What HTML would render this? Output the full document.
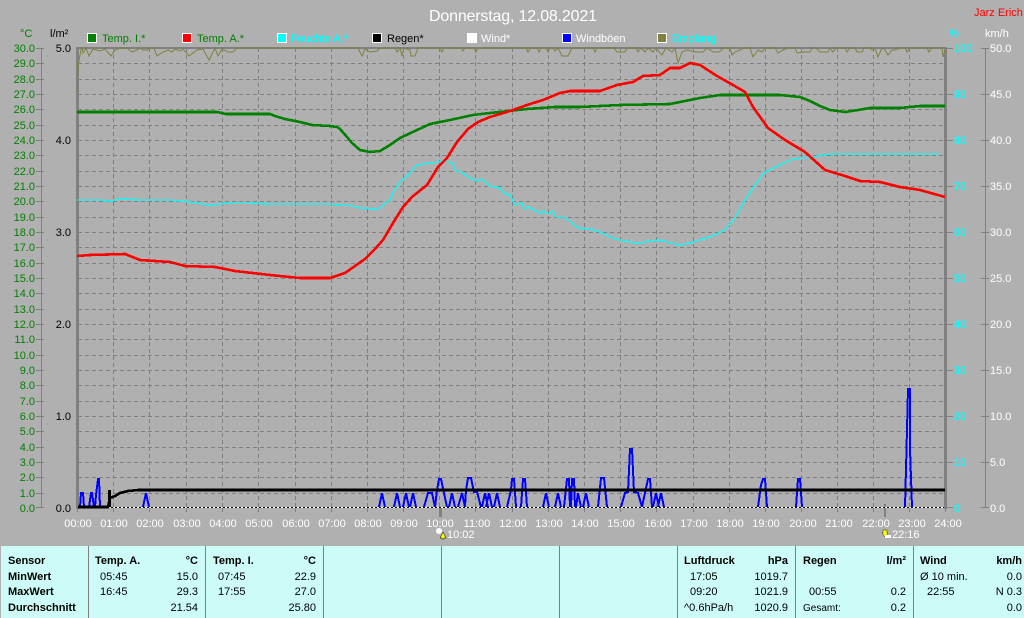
<!DOCTYPE html>
<html><head><meta charset="utf-8"><title>Donnerstag, 12.08.2021</title>
<style>
html,body{margin:0;padding:0;background:#b0b0b0}
svg{display:block;font-family:"Liberation Sans",sans-serif;font-size:11px}
.g text{fill:#008000;text-anchor:end}
.k text{fill:#000;text-anchor:end}
.c text{fill:#0ff;stroke:#0ff;stroke-width:.35;text-anchor:start}
.w text{fill:#fff;text-anchor:start}
.t text{fill:#fff;text-anchor:middle}
.b{font-weight:bold}
.r{text-anchor:end}
.d{shape-rendering:crispEdges;fill:none}
</style></head><body>
<svg width="1024" height="618" viewBox="0 0 1024 618" xmlns="http://www.w3.org/2000/svg">
<rect width="1024" height="618" fill="#b0b0b0"/>
<text x="429" y="21" font-size="16" fill="#fff" textLength="168">Donnerstag, 12.08.2021</text>
<text x="974" y="16" fill="#f00" font-size="11">Jarz Erich</text>
<text x="20" y="37" fill="#008000">°C</text>
<text x="50" y="37" fill="#000">l/m²</text>
<text x="949" y="37" fill="#0ff" stroke="#0ff" stroke-width=".3">%</text>
<text x="985" y="37" fill="#fff">km/h</text>

<g stroke="#fff" stroke-width="1" shape-rendering="crispEdges">
<rect x="87.5" y="33.5" width="9" height="9" fill="#008000"/>
<rect x="182.5" y="33.5" width="9" height="9" fill="#f00"/>
<rect x="277.5" y="33.5" width="9" height="9" fill="#0ff"/>
<rect x="372.5" y="33.5" width="9" height="9" fill="#000"/>
<rect x="467.5" y="33.5" width="9" height="9" fill="#fff"/>
<rect x="562.5" y="33.5" width="9" height="9" fill="#00f"/>
<rect x="657.5" y="33.5" width="9" height="9" fill="#808040"/>
</g>
<text x="102" y="42" fill="#008000">Temp. I.*</text>
<text x="197" y="42" fill="#008000">Temp. A.*</text>
<text x="291" y="42" fill="#0ff" stroke="#0ff" stroke-width=".3">Feuchte A.*</text>
<text x="387" y="42" fill="#000">Regen*</text>
<text x="481" y="42" fill="#fff">Wind*</text>
<text x="576" y="42" fill="#fff">Windböen</text>
<text x="672" y="42" fill="#0ff" stroke="#0ff" stroke-width=".3">Empfang</text>

<!-- grid -->
<path fill="none" stroke="#808080" stroke-width="1" stroke-dasharray="4 3" shape-rendering="crispEdges" d="M78 63.5H944M78 79.5H944M78 94.5H944M78 109.5H944M78 125.5H944M78 140.5H944M78 155.5H944M78 171.5H944M78 186.5H944M78 201.5H944M78 217.5H944M78 232.5H944M78 247.5H944M78 263.5H944M78 278.5H944M78 293.5H944M78 309.5H944M78 324.5H944M78 339.5H944M78 355.5H944M78 370.5H944M78 385.5H944M78 401.5H944M78 416.5H944M78 431.5H944M78 447.5H944M78 462.5H944M78 477.5H944M78 493.5H944
M113.5 48V508M149.5 48V508M186.5 48V508M222.5 48V508M258.5 48V508M295.5 48V508M331.5 48V508M367.5 48V508M403.5 48V508M439.5 48V508M475.5 48V508M512.5 48V508M548.5 48V508M584.5 48V508M620.5 48V508M656.5 48V508M693.5 48V508M729.5 48V508M765.5 48V508M801.5 48V508M837.5 48V508M873.5 48V508M909.5 48V508"/>

<!-- frame and axes -->
<g fill="#808080" shape-rendering="crispEdges">
<rect x="76" y="47" width="870" height="2"/>
<rect x="76" y="47" width="3" height="462"/>
<rect x="944" y="47" width="3" height="462"/>
<rect x="41" y="48" width="1" height="460"/>
<rect x="985" y="48" width="1" height="460"/>
<rect x="439" y="508" width="3" height="9"/>
<rect x="884" y="504" width="2" height="13"/>
</g>
<path fill="none" stroke="#808080" stroke-width="1" shape-rendering="crispEdges" d="M36 48.5H44M36 63.5H44M36 79.5H44M36 94.5H44M36 109.5H44M36 125.5H44M36 140.5H44M36 155.5H44M36 171.5H44M36 186.5H44M36 201.5H44M36 217.5H44M36 232.5H44M36 247.5H44M36 263.5H44M36 278.5H44M36 293.5H44M36 309.5H44M36 324.5H44M36 339.5H44M36 355.5H44M36 370.5H44M36 385.5H44M36 401.5H44M36 416.5H44M36 431.5H44M36 447.5H44M36 462.5H44M36 477.5H44M36 493.5H44M36 507.5H44
M946 48.5H953M946 94.5H953M946 140.5H953M946 186.5H953M946 232.5H953M946 278.5H953M946 324.5H953M946 370.5H953M946 416.5H953M946 462.5H953M946 507.5H953
M981 48.5H989M981 94.5H989M981 140.5H989M981 186.5H989M981 232.5H989M981 278.5H989M981 324.5H989M981 370.5H989M981 416.5H989M981 462.5H989M981 507.5H989
M77.5 508V512M113.5 508V512M149.5 508V512M186.5 508V512M222.5 508V512M258.5 508V512M295.5 508V512M331.5 508V512M367.5 508V512M403.5 508V512M475.5 508V512M512.5 508V512M548.5 508V512M584.5 508V512M620.5 508V512M656.5 508V512M693.5 508V512M729.5 508V512M765.5 508V512M801.5 508V512M837.5 508V512M873.5 508V512M909.5 508V512M945.5 508V512"/>

<!-- axis labels -->
<g class="g">
<text x="35" y="52">30.0</text><text x="35" y="67">29.0</text><text x="35" y="83">28.0</text><text x="35" y="98">27.0</text><text x="35" y="113">26.0</text><text x="35" y="129">25.0</text><text x="35" y="144">24.0</text><text x="35" y="159">23.0</text><text x="35" y="175">22.0</text><text x="35" y="190">21.0</text><text x="35" y="205">20.0</text><text x="35" y="221">19.0</text><text x="35" y="236">18.0</text><text x="35" y="251">17.0</text><text x="35" y="267">16.0</text><text x="35" y="282">15.0</text><text x="35" y="297">14.0</text><text x="35" y="313">13.0</text><text x="35" y="328">12.0</text><text x="35" y="343">11.0</text><text x="35" y="359">10.0</text><text x="35" y="374">9.0</text><text x="35" y="389">8.0</text><text x="35" y="405">7.0</text><text x="35" y="420">6.0</text><text x="35" y="435">5.0</text><text x="35" y="451">4.0</text><text x="35" y="466">3.0</text><text x="35" y="481">2.0</text><text x="35" y="497">1.0</text><text x="35" y="512">0.0</text>
</g>
<g class="k">
<text x="71" y="52">5.0</text><text x="71" y="144">4.0</text><text x="71" y="236">3.0</text><text x="71" y="328">2.0</text><text x="71" y="420">1.0</text><text x="71" y="512">0.0</text>
</g>
<g class="c">
<text x="954" y="52">100</text><text x="954" y="98">90</text><text x="954" y="144">80</text><text x="954" y="190">70</text><text x="954" y="236">60</text><text x="954" y="282">50</text><text x="954" y="328">40</text><text x="954" y="374">30</text><text x="954" y="420">20</text><text x="954" y="466">10</text><text x="954" y="512">0</text>
</g>
<g class="w">
<text x="990" y="52">50.0</text><text x="990" y="98">45.0</text><text x="990" y="144">40.0</text><text x="990" y="190">35.0</text><text x="990" y="236">30.0</text><text x="990" y="282">25.0</text><text x="990" y="328">20.0</text><text x="990" y="374">15.0</text><text x="990" y="420">10.0</text><text x="990" y="466">5.0</text><text x="990" y="512">0.0</text>
</g>
<g class="t">
<text x="78" y="527">00:00</text><text x="114" y="527">01:00</text><text x="150" y="527">02:00</text><text x="187" y="527">03:00</text><text x="223" y="527">04:00</text><text x="259" y="527">05:00</text><text x="296" y="527">06:00</text><text x="332" y="527">07:00</text><text x="368" y="527">08:00</text><text x="404" y="527">09:00</text><text x="440" y="527">10:00</text><text x="477" y="527">11:00</text><text x="513" y="527">12:00</text><text x="549" y="527">13:00</text><text x="585" y="527">14:00</text><text x="621" y="527">15:00</text><text x="658" y="527">16:00</text><text x="694" y="527">17:00</text><text x="730" y="527">18:00</text><text x="766" y="527">19:00</text><text x="803" y="527">20:00</text><text x="839" y="527">21:00</text><text x="876" y="527">22:00</text><text x="912" y="527">23:00</text><text x="948" y="527">24:00</text>
</g>

<!-- Empfang -->
<polyline fill="none" stroke="#808040" stroke-width="1" points="77,92 78,70 79,60 81,50 82,48 83,53 86,48 89,56 93,49 100,51 105,49 111,56 115,50 120,48 127,48 132,52 137,50 140,48 143,50 148,50 150,48 154,48 157,56 163,52 168,50 172,52 175,49 180,51 183,49 189,56 197,50 203,49 209,60 215,48 218,56 222,49 228,52 233,52 237,48 358,48 362,56 365,49 370,52 377,51 380,48 395,48 397,52 400,48 402,56 404,48 410,50 411,56 415,56 418,48 440,48 442,52 444,48 461,48 463,51 465,48 474,48 476,52 478,48 526,48 528,52 531,48 537,48 539,52 541,48 546,48 548,52 550,48 553,48 555,51 558,48 562,56 568,56 572,48 593,48 595,52 597,48 614,48 617,52 625,52 627,48 636,48 638,52 641,48 645,52 648,48 653,52 656,48 662,55 666,48 672,52 675,48 678,63 682,52 687,50 695,52 703,52 707,48 713,52 719,52 724,48 730,48 732,55 735,52 740,50 744,48 750,48 753,57 758,50 762,52 765,48 775,48 778,53 783,50 788,48 795,48 797,53 803,52 810,52 812,48 816,48 820,52 828,52 830,48 833,52 836,48 845,48 847,52 850,48 855,48 857,52 862,52 864,48 870,48 872,50 875,48 878,57 882,48 885,50 888,55 892,50 895,50 900,48 905,48 907,52 910,48 927,48 929,52 932,48 942,48 943,57 945,50"/>

<!-- Feuchte -->
<polyline class="d" stroke="#0ff" stroke-width="1.3" points="77,200 100,200 110,201 120,199 140,200 170,200 190,202 210,205 230,203 250,203 270,204 300,204 330,204 340,205 348,205 360,208 378,209 390,200 394,191 400,182 408,175 417,165 423,164 432,163 437,162 445,161 452,163 456,171 461,172 470,178 477,181 482,179 490,186 500,188 504,193 510,195 515,205 522,203 524,209 528,207 540,213 544,211 548,214 553,211 556,217 563,217 570,221 578,228 590,229 600,232 612,238 620,240 630,242 640,243 650,241 660,240 670,243 680,245 690,243 700,240 712,236 725,230 735,218 745,200 755,185 765,172 778,166 790,160 800,158 810,158 822,155 835,154 940,154"/>

<!-- Wind baseline -->
<path d="M79 507.5H944" stroke="#000" stroke-width="1" stroke-dasharray="2 2" fill="none" shape-rendering="crispEdges"/>
<path d="M81 507.5H944" stroke="#fff" stroke-width="1" stroke-dasharray="2 2" fill="none" shape-rendering="crispEdges"/>

<!-- Windböen -->
<path class="d" stroke="#00f" stroke-width="2" d="M80 507L81 493H83L84 507M89 507L91 493H92L94 507M95 507L96 495L98 479H99L100 507M143 507L146 493L149 507M379 507L382 493L385 507M394 507L397 493L400 507M403 507L406 493L409 507M410 507L413 493L416 507M424 507L428 493H432L435 507M435 507L437 490L439 479H441L447 507M449 507L452 493L455 507M458 507L462 493L465 507M465 507L466 490L468 478H471L474 492H477L481 507M482 507L485 493L488 507M486 507L489 493L492 507M494 507L497 493L500 507M507 507L511 490L512 479H514L516 507M521 507L523 479H525L527 507M543 507L546 493L549 507M555 507L558 493L561 507M564 507L567 479H569L570 507M571 507L572 479H574L575 507M576 507L578 493L581 507M583 507L586 493L589 507M598 507L601 478H604L607 507M621 507L625 493L628 492L630 449H632L634 492L638 493L642 507M642 507L645 493L648 479H650L652 507M653 507L656 493L659 507M658 507L661 493L664 507M758 507L761 485L763 479H765L767 507M796 507L798 479H800L802 507M905 507L906 469L907 429L908 389H910V449L912 507"/>

<!-- Regen -->
<polyline class="d" stroke="#000" stroke-width="2.6" points="78,507 108,507 110,498 115,496 120,493 128,491 138,490 945,490"/>
<path d="M109.5 507V490" stroke="#000" stroke-width="3" shape-rendering="crispEdges"/>

<!-- Temp I -->
<polyline class="d" stroke="#008000" stroke-width="2.6" points="77,112 217,112 226,114 270,114 275,116 285,119 300,122 312,125 330,126 337,127 340,129 347,137 352,143 360,150 370,152 380,151 390,145 400,138 417,130 430,124 450,120 473,115 490,113 527,109 555,107 580,107 620,105 670,104 685,101 700,98 720,95 780,95 800,97 810,101 820,106 830,110 845,112 858,110 870,108 900,108 920,106 945,106"/>

<!-- Temp A -->
<polyline class="d" stroke="#f00" stroke-width="2.6" points="77,256 90,255 125,254 140,260 170,262 185,266 215,267 235,271 270,275 300,278 330,278 345,273 365,259 375,249 383,240 393,223 403,207 412,197 427,185 438,167 447,158 457,142 468,129 478,122 490,117 510,111 527,105 543,100 560,93 570,91 600,91 617,85 633,82 643,76 660,75 670,68 680,68 690,63 700,65 717,76 733,85 745,92 753,107 768,128 785,140 805,152 825,170 845,176 860,181 880,182 900,187 920,190 945,197"/>

<!-- sun markers -->
<text x="447" y="538" fill="#fff">10:02</text>
<text x="892" y="538" fill="#fff">22:16</text>
<circle cx="439" cy="531" r="3" fill="#fff"/>
<path d="M443 532L446 538H444V539H442V538H440Z" fill="#ff0" stroke="#000" stroke-width=".5"/>
<path d="M883 530H887V533H888L885 537L882 533H883Z" fill="#ff0" stroke="#000" stroke-width=".4"/>
<rect x="885" y="535" width="6" height="3" fill="#fff"/>

<!-- table -->
<rect x="1" y="546" width="1023" height="72" fill="#ccfbf8"/>
<path d="M88.5 546V618M205.5 546V618M323.5 546V618M441.5 546V618M559.5 546V618M677.5 546V618M795.5 546V618M913.5 546V618" stroke="#808080" stroke-width="1" shape-rendering="crispEdges"/>
<g fill="#000">
<text class="b" x="8" y="564">Sensor</text><text class="b" x="8" y="580">MinWert</text><text class="b" x="8" y="595">MaxWert</text><text class="b" x="8" y="611">Durchschnitt</text>

<text class="b" x="95" y="564">Temp. A.</text><text class="b r" x="198" y="564">°C</text>
<text x="100" y="580">05:45</text><text class="r" x="198" y="580">15.0</text>
<text x="100" y="595">16:45</text><text class="r" x="198" y="595">29.3</text>
<text class="r" x="198" y="611">21.54</text>

<text class="b" x="213" y="564">Temp. I.</text><text class="b r" x="316" y="564">°C</text>
<text x="218" y="580">07:45</text><text class="r" x="316" y="580">22.9</text>
<text x="218" y="595">17:55</text><text class="r" x="316" y="595">27.0</text>
<text class="r" x="316" y="611">25.80</text>

<text class="b" x="684" y="564">Luftdruck</text><text class="b r" x="788" y="564">hPa</text>
<text x="690" y="580">17:05</text><text class="r" x="788" y="580">1019.7</text>
<text x="690" y="595">09:20</text><text class="r" x="788" y="595">1021.9</text>
<text x="684" y="611">^0.6hPa/h</text><text class="r" x="788" y="611">1020.9</text>

<text class="b" x="803" y="564">Regen</text><text class="b r" x="906" y="564">l/m²</text>
<text x="809" y="595">00:55</text><text class="r" x="906" y="595">0.2</text>
<text x="803" y="611" font-size="10">Gesamt:</text><text class="r" x="906" y="611">0.2</text>

<text class="b" x="920" y="564">Wind</text><text class="b r" x="1022" y="564">km/h</text>
<text x="920" y="580">Ø 10 min.</text><text class="r" x="1022" y="580">0.0</text>
<text x="927" y="595">22:55</text><text class="r" x="1022" y="595">N 0.3</text>
<text class="r" x="1022" y="611">0.0</text>
</g>
</svg>
</body></html>
